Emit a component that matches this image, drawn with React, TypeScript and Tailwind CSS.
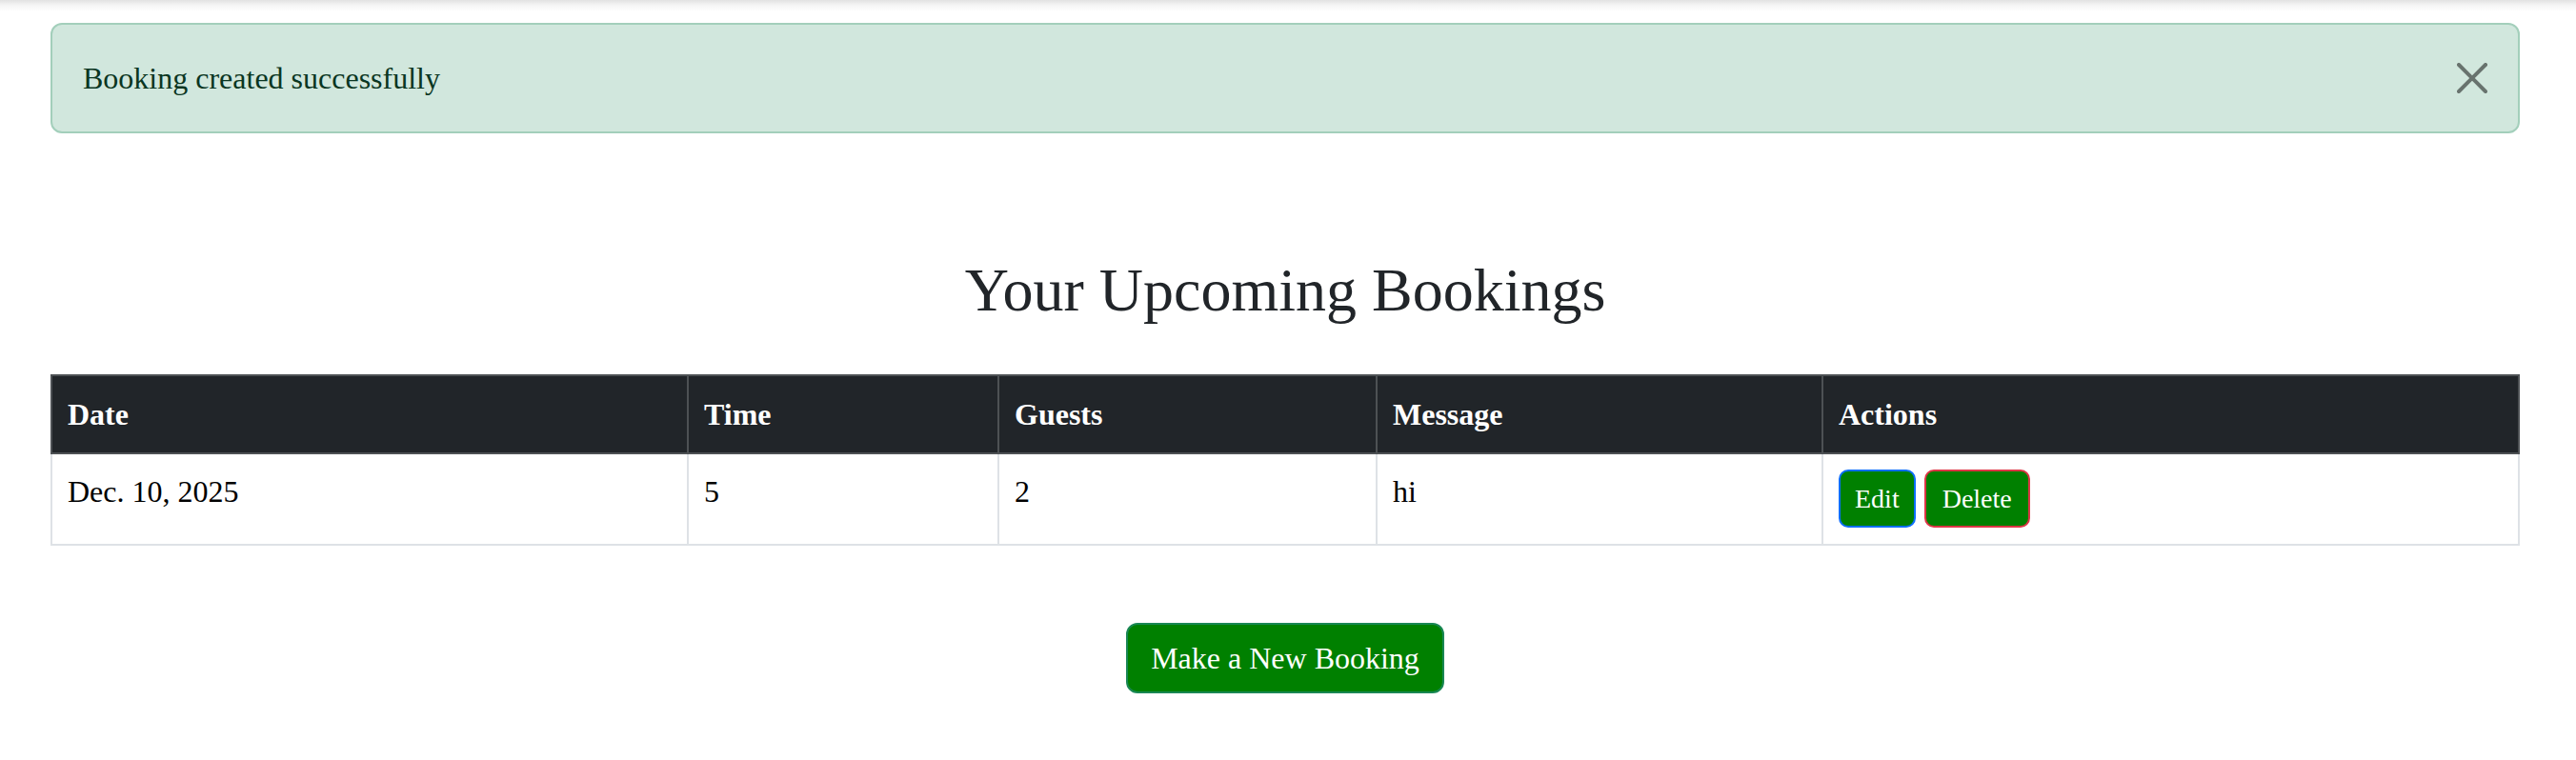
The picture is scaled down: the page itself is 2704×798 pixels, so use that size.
import React from "react";

const serif = "font-['Liberation_Serif','Times_New_Roman',serif]";

function CloseIcon() {
  return (
    <svg width="32" height="32" viewBox="0 0 16 16" aria-hidden="true">
      <path
        fill="#000"
        fillOpacity="0.5"
        d="M.293.293a1 1 0 0 1 1.414 0L8 6.586 14.293.293a1 1 0 1 1 1.414 1.414L9.414 8l6.293 6.293a1 1 0 0 1-1.414 1.414L8 9.414l-6.293 6.293a1 1 0 0 1-1.414-1.414L6.586 8 .293 1.707a1 1 0 0 1 0-1.414z"
      />
    </svg>
  );
}

const cols = ["w-[666px]", "w-[326px]", "w-[397px]", "w-[468px]", "w-[731px]"];

export default function App() {
  const headers = ["Date", "Time", "Guests", "Message", "Actions"];
  const row = ["Dec. 10, 2025", "5", "2", "hi"];
  return (
    <div className={`${serif} min-h-[798px] w-[2704px] bg-white`}>
      <div className="h-[24px] bg-[linear-gradient(to_bottom,#e2e2e2,#f6f6f6_6px,#ffffff_12px)]" />
      <div className="ml-[53px] w-[2592px]">
        {/* Alert */}
        <div className="relative h-[116px] rounded-[12px] border-2 border-[#a3cfbb] bg-[#d1e7dd] px-[32px] py-[32px] text-[32px] leading-[48px] text-[#0a3622]">
          Booking created successfully
          <button className="absolute right-[32px] top-[40px] flex h-[32px] w-[32px] items-center justify-center">
            <CloseIcon />
          </button>
        </div>

        {/* Title */}
        <h2 className="mt-[126px] text-center text-[64px] font-normal leading-[77px] text-[#212529]">
          Your Upcoming Bookings
        </h2>

        {/* Table */}
        <div className="mt-[50px] text-[32px] leading-[48px]">
          <div className="flex h-[84px] border-2 border-[#4d5154] bg-[#212529] font-bold text-white">
            {headers.map((h, i) => (
              <div
                key={h}
                className={`${cols[i]} shrink-0 px-[16px] py-[16px] ${i === 0 ? "" : "border-l-2 border-[#4d5154]"}`}
              >
                {h}
              </div>
            ))}
          </div>
          <div className="flex h-[96px] border-x-2 border-b-2 border-[#dee2e6] bg-white text-black">
            {row.map((c, i) => (
              <div
                key={i}
                className={`${cols[i]} shrink-0 px-[16px] py-[15px] ${i === 0 ? "" : "border-l-2 border-[#dee2e6]"}`}
              >
                {c}
              </div>
            ))}
            <div className="flex w-[731px] shrink-0 items-start gap-[9px] border-l-2 border-[#dee2e6] px-[16px] py-[16px]">
              <button className="flex h-[61px] items-center rounded-[10px] border-2 border-[#0d6efd] bg-[#008000] px-[15px] text-[28px] leading-[32px] text-white">
                Edit
              </button>
              <button className="flex h-[61px] items-center rounded-[10px] border-2 border-[#dc3545] bg-[#008000] px-[17px] text-[28px] leading-[32px] text-white">
                Delete
              </button>
            </div>
          </div>
        </div>

        {/* New booking */}
        <div className="mt-[81px] flex justify-center">
          <button className="flex h-[74px] items-center rounded-[12px] border-2 border-[#198754] bg-[#008000] px-[24px] text-[32px] leading-[48px] text-white">
            Make a New Booking
          </button>
        </div>
      </div>
    </div>
  );
}
